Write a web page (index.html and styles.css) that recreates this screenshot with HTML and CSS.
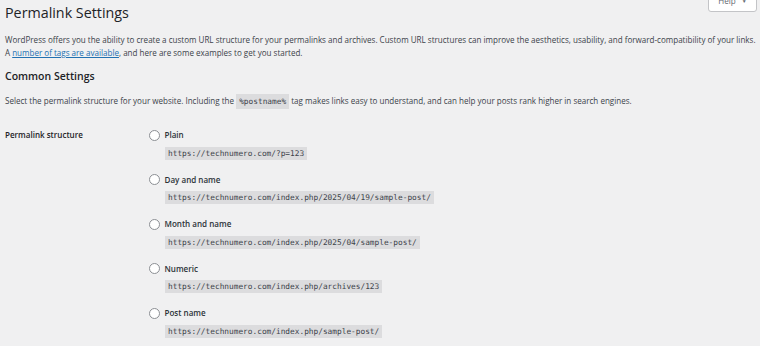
FILE: index.html
```html
<!DOCTYPE html>
<html>
<head>
<meta charset="utf-8">
<link rel="stylesheet" href="styles.css">
</head>
<body>
<div class="wrap">
  <button class="help-tab">Help <span class="caret">▼</span></button>
  <h1 class="title">Permalink Settings</h1>
  <p class="intro">WordPress offers you the ability to create a custom URL structure for your permalinks and archives. Custom URL structures can improve the aesthetics, usability, and forward-compatibility of your links.<br>A <a href="#" class="link">number of tags are available</a>, and here are some examples to get you started.</p>
  <h2 class="section">Common Settings</h2>
  <p class="desc">Select the permalink structure for your website. Including the <code class="tag">%postname%</code> tag makes links easy to understand, and can help your posts rank higher in search engines.</p>
  <div class="form-row">
    <div class="row-label">Permalink structure</div>
    <div class="options">
      <div class="option">
        <label class="opt-label"><span class="radio"></span>Plain</label>
        <code class="sample">https://technumero.com/?p=123</code>
      </div>
      <div class="option">
        <label class="opt-label"><span class="radio"></span>Day and name</label>
        <code class="sample">https://technumero.com/index.php/2025/04/19/sample-post/</code>
      </div>
      <div class="option">
        <label class="opt-label"><span class="radio"></span>Month and name</label>
        <code class="sample">https://technumero.com/index.php/2025/04/sample-post/</code>
      </div>
      <div class="option">
        <label class="opt-label"><span class="radio"></span>Numeric</label>
        <code class="sample">https://technumero.com/index.php/archives/123</code>
      </div>
      <div class="option">
        <label class="opt-label"><span class="radio"></span>Post name</label>
        <code class="sample">https://technumero.com/index.php/sample-post/</code>
      </div>
    </div>
  </div>
</div>
</body>
</html>
```
FILE: styles.css
```css
html, body {
  margin: 0;
  padding: 0;
  background: #f0f0f1;
}
body {
  font-family: "Open Sans", "Noto Sans", sans-serif;
  color: #3c434a;
  font-size: 8.05px;
  overflow: hidden;
}
.wrap {
  position: relative;
  padding-left: 5px;
}
.help-tab {
  position: absolute;
  top: -14px;
  right: 3px;
  width: 49px;
  height: 23px;
  background: #fff;
  border: 1px solid #c3c4c7;
  border-radius: 0 0 3px 3px;
  font-family: inherit;
  font-size: 8.05px;
  color: #646970;
  padding: 0;
  line-height: 21px;
}
.caret {
  font-size: 5px;
  margin-left: 4px;
  vertical-align: middle;
}
.title {
  margin: 3px 0 0;
  font-size: 14.3px;
  line-height: 20px;
  font-weight: 400;
  color: #1d2327;
}
.intro {
  margin: 10px 0 0;
  line-height: 13px;
  white-space: nowrap;
}
.link {
  color: #2271b1;
  text-decoration: underline;
}
.section {
  margin: 10px 0 0;
  font-size: 10.5px;
  line-height: 15px;
  font-weight: 600;
  color: #1d2327;
}
.desc {
  margin: 10px 0 0;
  line-height: 13px;
}
.tag, .sample {
  font-family: "DejaVu Sans Mono", "Liberation Mono", monospace;
  font-size: 7.8px;
  background: #dcdcde;
  color: #3c434a;
}
.tag {
  padding: 3px 3px;
}
.form-row {
  display: flex;
  margin-top: 20px;
}
.row-label {
  width: 143.5px;
  flex: none;
  font-weight: 600;
  color: #1d2327;
  line-height: 14px;
}
.options {
  display: flex;
  flex-direction: column;
}
.option {
  display: flex;
  flex-direction: column;
  align-items: flex-start;
  margin-bottom: 13px;
}
.opt-label {
  display: flex;
  align-items: center;
  line-height: 14px;
  font-weight: 600;
  color: #2c3338;
}
.radio {
  width: 9px;
  height: 9px;
  border: 1px solid #8c8f94;
  border-radius: 50%;
  background: #fff;
  margin-right: 5px;
  flex: none;
}
.sample {
  margin-top: 4.5px;
  margin-left: 16.5px;
  padding: 0 3px;
  line-height: 13px;
}
```
